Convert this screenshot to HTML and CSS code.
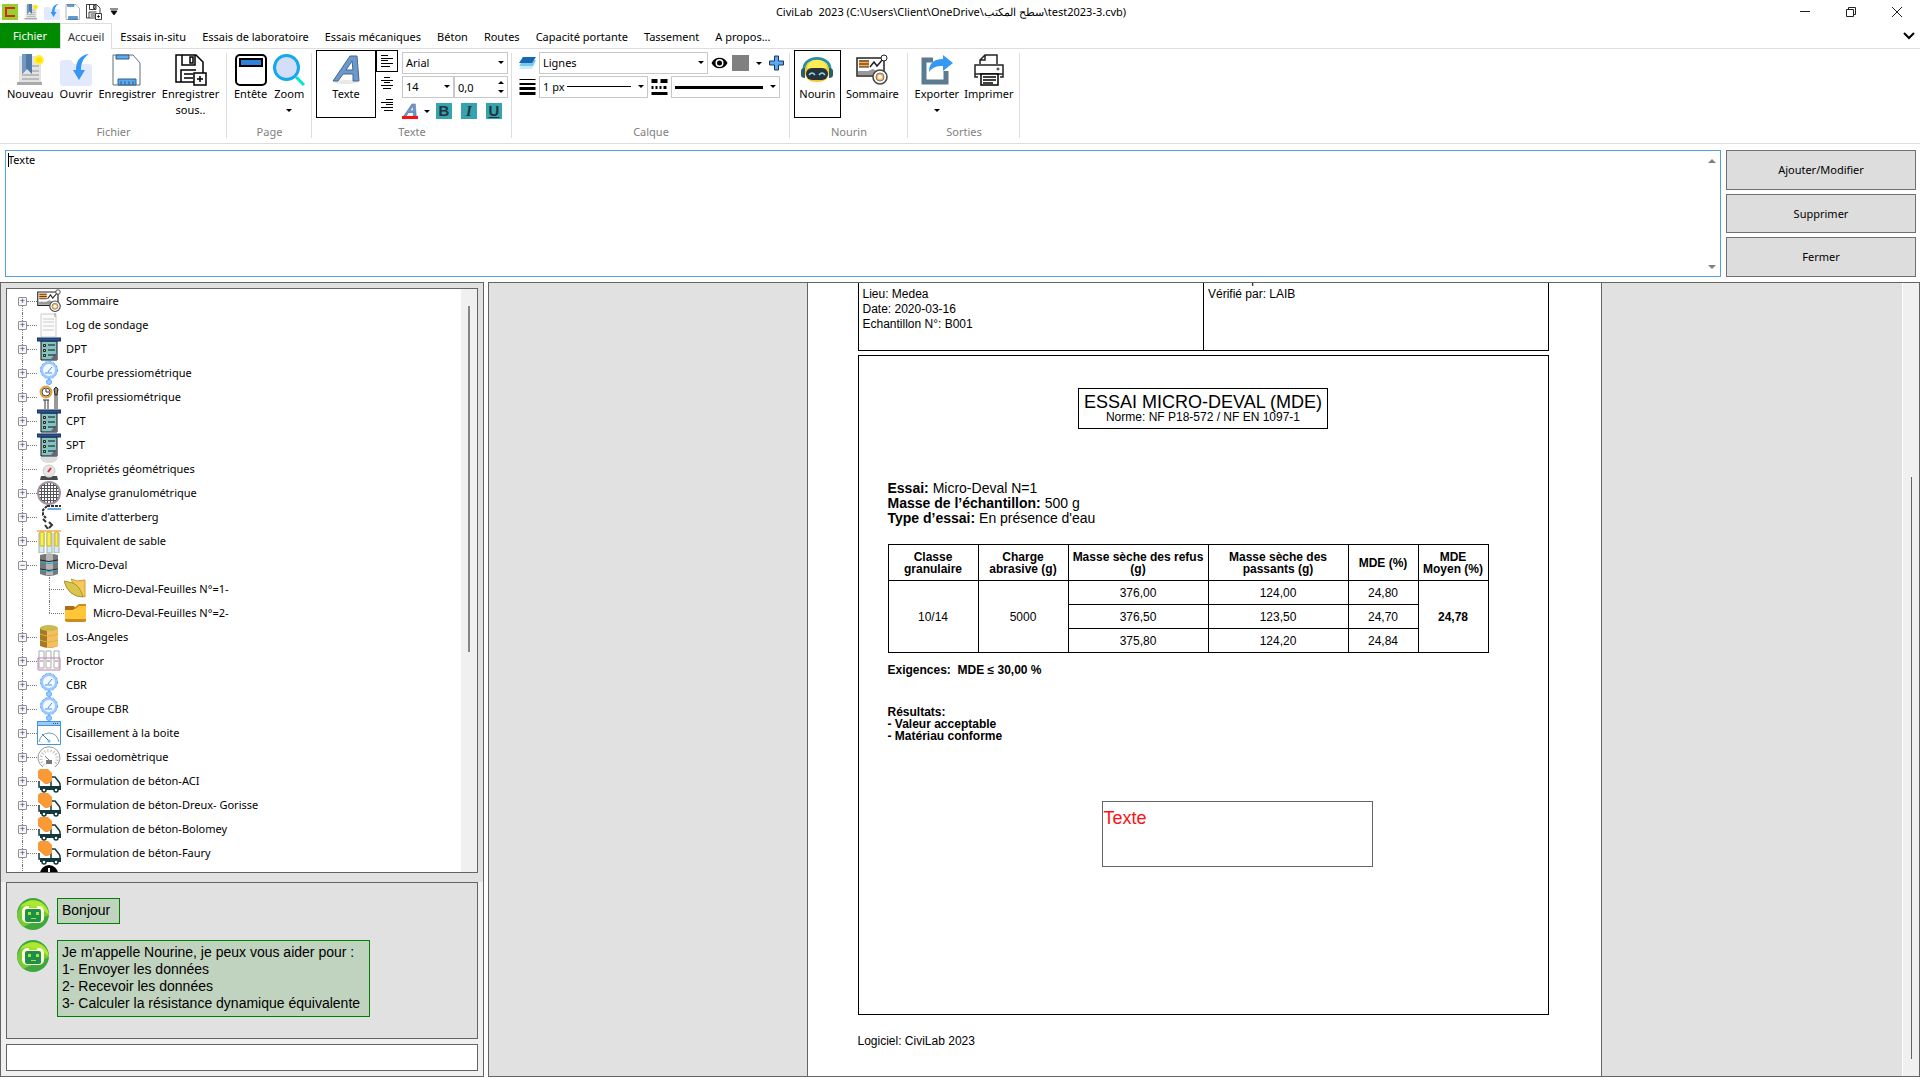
FILE: index.html
```html
<!DOCTYPE html>
<html lang="fr">
<head>
    <meta charset="UTF-8">
    <meta name="viewport" content="width=device-width, initial-scale=1.0">
    <title>CiviLab 2023</title>
    <link rel="stylesheet" href="styles.css">
</head>
<body>

    <!-- Icons -->
    <svg class="sprite" aria-hidden="true">
        <symbol id="logo" viewBox="0 0 16 16">
            <rect width="16" height="16" fill="#8fd42e"/>
            <path d="M13 4H4v8h9" fill="none" stroke="#e8201c" stroke-width="2"/>
        </symbol>
        <symbol id="new" viewBox="0 0 32 32">
            <path d="M5 2h22v27H5z" fill="#e3e3e3"/>
            <path d="M3 28h25v3H3z" fill="#aaa"/>
            <path d="M18 12h7M18 17h7M8 21h17M8 25h17" stroke="#bbb" stroke-width="2"/>
            <path d="M8 0h10v20l-5-5-5 5z" fill="#4f79a8"/>
            <path d="M8 0h4v16l-4 4z" fill="#7299c2"/>
            <circle cx="25" cy="6" r="5" fill="#fff04a"/>
            <circle cx="25" cy="6" r="3" fill="#ffe100"/>
        </symbol>
        <symbol id="open" viewBox="0 0 32 32">
            <path d="M0 9q0-3 3-3h8l3 4h15q3 0 3 3v16q0 3-3 3H3q-3 0-3-3z" fill="#e2e9fd"/>
            <path d="M29 0C20 1 16 7 16 16h-3l6 10 6-10h-4c0-7 2-12 8-16z" fill="#3596f5"/>
        </symbol>
        <symbol id="save" viewBox="0 0 32 32">
            <path d="M2 1h20l7 8v22H2z" fill="#fff" stroke="#5f7180"/>
            <path d="M5 1h13v4H5zM7 25h18v6H7z" fill="#5aa9f2" stroke="#345d80"/>
            <path d="M10 27v4M14 27v4M18 27v4M22 27v4" stroke="#26649c"/>
        </symbol>
        <symbol id="saveas" viewBox="0 0 32 32">
            <path d="M20 28H1V1h20l7 7v11M7 1v10h13V1M6 28V16h15M9 20h9M9 24h9M15 3h3v6h-3z" fill="none" stroke="#000" stroke-width="1.500"/>
            <path d="M19 19h12v12H19zM25 22v6M22 25h6" fill="#fff" stroke="#000" stroke-width="1.500"/>
        </symbol>
        <symbol id="header" viewBox="0 0 32 32">
            <rect x="1" y="1" width="30" height="30" rx="4" fill="#fff" stroke="#000" stroke-width="2"/>
            <rect x="5" y="5" width="22" height="7" fill="#2d83d8" stroke="#000" stroke-width="2"/>
        </symbol>
        <symbol id="zoom" viewBox="0 0 32 32">
            <path d="M23 23l8 8" stroke="#00e5cf" stroke-width="3"/>
            <circle cx="13.500" cy="13.500" r="12" fill="#d4def8" stroke="#16a8ec" stroke-width="3"/>
        </symbol>
        <symbol id="texta" viewBox="0 0 32 32">
            <ellipse cx="16" cy="28" rx="12" ry="2" fill="#e8e8e8"/>
            <path d="M3 27L20 2h7l2 25h-6v-7H13l-5 7zM16 16h7l-1-9z" fill="#6c99cc" stroke="#44658e" fill-rule="evenodd"/>
        </symbol>
        <symbol id="layers" viewBox="0 0 17 14">
            <path d="M4 7h12l-3 6H0z" fill="#c8ecfb"/>
            <path d="M4 4h13l-3 6H0z" fill="#79c8f0"/>
            <path d="M4 1h13l-4 6H0z" fill="#1566b4"/>
        </symbol>
        <symbol id="eye" viewBox="0 0 16 16">
            <path d="M0 8C3 1 13 1 16 8c-3 7-13 7-16 0z"/>
            <circle cx="8" cy="8" r="4" fill="#fff"/>
            <circle cx="8" cy="8" r="2.500"/>
        </symbol>
        <symbol id="plus" viewBox="0 0 16 16">
            <path d="M6 1h4v5h5v4h-5v5H6v-5H1V6h5z" fill="#5ba8f5" stroke="#16385a"/>
        </symbol>
        <symbol id="weights" viewBox="0 0 16 16">
            <path d="M0 0h16v1H0zM0 4h16v2H0zM0 8h16v3H0zM0 13h16v3H0z"/>
        </symbol>
        <symbol id="dashes" viewBox="0 0 16 16">
            <path d="M0 0h6v4H0zM9 0h7v4H9zM0 7h2v3H0zM4 7h2v3H4zM8 7h2v3H8zM12 7h3v3h-3zM0 13h16v3H0z"/>
        </symbol>
        <symbol id="bot" viewBox="0 0 32 32">
            <path d="M3 15C3 1 29 1 29 15" fill="none" stroke="#2a8f9e" stroke-width="3"/>
            <path d="M4 18C3 2 29 2 28 18q0 10-12 10T4 18z" fill="#f1c92f"/>
            <path d="M6 14C8 3 24 3 26 14z" fill="#fbee55"/>
            <rect x="5" y="14" width="22" height="12" rx="6" fill="#26333c"/>
            <path d="M8 21q3-4 6 0M18 21q3-4 6 0" fill="none" stroke="#8bd8ef" stroke-width="1.500"/>
            <path d="M0 17q0-3 4-3v10q-4 0-4-3zM32 17q0-3-4-3v10q4 0 4-3z" fill="#27606d"/>
        </symbol>
        <symbol id="report" viewBox="0 0 32 32">
            <path d="M1 4h27v18H1z" fill="#fff" stroke="#222" stroke-width="1.500"/>
            <path d="M3 6h10v7H3z" fill="#ffac4a"/>
            <path d="M3 7h10M3 10h10M3 13h10" stroke="#222"/>
            <path d="M2 17h10l5-2 5 3v3H2z" fill="#999"/>
            <path d="M14 13l4-5 3 4 7-8" fill="none" stroke="#222" stroke-width="1.500"/>
            <circle cx="28" cy="4" r="3" fill="#fff" stroke="#222"/>
            <circle cx="24" cy="23" r="7" fill="#fff" stroke="#444" stroke-width="1.500"/>
            <circle cx="24" cy="23" r="4" fill="#ffb45a" stroke="#777"/>
            <circle cx="24" cy="23" r="2" fill="#fff"/>
        </symbol>
        <symbol id="export" viewBox="0 0 32 32">
            <path d="M12 6H3v22h22V17" fill="none" stroke="#5b7b91" stroke-width="5"/>
            <path d="M8 18C8 9 13 5 22 5V1l10 8-10 8v-5c-7 0-10 1-14 6z" fill="#3598f5"/>
        </symbol>
        <symbol id="print" viewBox="0 0 32 32">
            <path d="M7 10V6l5-5h12v9M12 1v5H7M5 23H2V11h28v12h-3M2 20h28" fill="none" stroke="#222" stroke-width="1.500"/>
            <circle cx="25" cy="15" r="1" fill="none" stroke="#222"/>
            <path d="M8 20h17v11H8zM10 23h13M10 26h13M10 29h10" fill="#fff" stroke="#000" stroke-width="1.500"/>
        </symbol>
        <symbol id="sheet" viewBox="0 0 24 24">
            <path d="M4 1h15v23H4z" fill="#fbfbfb" stroke="#ccc"/>
            <path d="M6 6h11M6 9h11M6 13h11M6 17h11" stroke="#ccc"/>
            <path d="M18 0v4" stroke="#999"/>
        </symbol>
        <symbol id="rig" viewBox="0 0 24 24">
            <path d="M4 4h16v19H4z" fill="#84c3c3" stroke="#111"/>
            <path d="M13 23l7-8v8z" fill="#667"/>
            <path d="M0 1h24v3H0z" fill="#2c5597" stroke="#132a50"/>
            <path d="M11 8h7M11 13h7M11 18h7" stroke="#111"/>
            <path d="M6.500 7.500h2v2h-2zM6.500 12.500h2v2h-2zM6.500 17.500h2v2h-2z" fill="#ffb340" stroke="#222"/>
        </symbol>
        <symbol id="gauge" viewBox="0 0 24 24">
            <circle cx="12" cy="9" r="7.500" fill="#f3f9ff" stroke="#9ccaff" stroke-width="3"/>
            <circle cx="12" cy="9" r="8.500" fill="none" stroke="#6aaeff" stroke-dasharray="2 2"/>
            <path d="M11 11l4-5M8 12h7M12 18v2" stroke="#3e91f5"/>
            <circle cx="12" cy="21" r="2.500" fill="#9ccaff" stroke="#5da5fa"/>
        </symbol>
        <symbol id="profile" viewBox="0 0 24 24">
            <circle cx="9" cy="7" r="5.500" fill="#fff" stroke="#e4a237" stroke-width="2"/>
            <circle cx="9" cy="7" r="4" fill="none" stroke="#444"/>
            <path d="M9 4v3h3M6 15h6M8 15v9M11 15v9M18 9v15M20 9v15" fill="none" stroke="#333"/>
            <path d="M19 2l2 2-1 6h-2l-1-6z" fill="#888" stroke="#222"/>
        </symbol>
        <symbol id="scale" viewBox="0 0 24 24">
            <path d="M3 0h18q-1 6-9 6T3 0z" fill="#ddd"/>
            <circle cx="12" cy="14" r="6" fill="#e4e4e9" stroke="#ccc"/>
            <path d="M4 19h4q4 3 8 0h4l1 4H3z" fill="#494949"/>
            <path d="M11 15l3-4" stroke="#e33333" stroke-width="2"/>
        </symbol>
        <symbol id="sieve" viewBox="0 0 24 24">
            <circle cx="12" cy="12" r="11" fill="#fff" stroke="#a08f9e" stroke-width="2"/>
            <path d="M4.500 5v14M7.500 3v18M10.500 2v20M13.500 2v20M16.500 3v18M19.500 5v14M5 4.500h14M3 7.500h18M2 10.500h20M2 13.500h20M3 16.500h18M5 19.500h14" stroke="#555"/>
        </symbol>
        <symbol id="limit" viewBox="0 0 24 24">
            <path d="M10 1h14M10 1l-4 4v5l3 3" fill="none" stroke="#333" stroke-width="2" stroke-dasharray="3 1"/>
            <path d="M11 3h13v2H10z" fill="#67a8e6"/>
            <path d="M6 14l3 3M12 17l3 3-3 3M8 20l3 4" fill="none" stroke="#333" stroke-width="2"/>
        </symbol>
        <symbol id="tubes" viewBox="0 0 24 24">
            <path d="M0 2h24" stroke="#f6bd8b" stroke-width="2"/>
            <path d="M2 4h5v20H2zM10 4h5v20h-5zM17 4h5v20h-5z" fill="#cdeefb" stroke="#aaa"/>
            <path d="M3 3h4v14H3zM10 3h4v14h-4zM18 3h3v14h-3z" fill="#faef51" stroke="#c8b928"/>
        </symbol>
        <symbol id="drum" viewBox="0 0 24 24">
            <path d="M3 2v19q9 4 18 0V2q-9-3-18 0z" fill="#777"/>
            <path d="M9 1h7v21H9z" fill="#b4b4b4"/>
            <path d="M3 7q9 3 18 0M3 16q9 3 18 0" fill="none" stroke="#222"/>
            <path d="M3 9q9 3 18 0M3 17q9 3 18 0" fill="none" stroke="#2aa8d3"/>
        </symbol>
        <symbol id="folderopen" viewBox="0 0 24 24">
            <path d="M7 2l6 2 8-1v17l-7-3z" fill="#f7c85e" stroke="#d29b32"/>
            <path d="M0 4l9 2q7 3 10 14-7 0-12-4T0 4z" fill="#d9c54d" stroke="#a99629"/>
        </symbol>
        <symbol id="folder" viewBox="0 0 24 24">
            <path d="M1 6h10l4-3h7v17q0 1-2 1H3q-2 0-2-2z" fill="#cc8b1d"/>
            <path d="M1 8h10l4-3h7v13H1z" fill="#ffc637"/>
            <path d="M1 5h9l1 2-2 2H1z" fill="#b06c1b"/>
        </symbol>
        <symbol id="barrel" viewBox="0 0 24 24">
            <path d="M3 3v18q9 4 18 0V3z" fill="#a87828"/>
            <path d="M10 3h11v18q-5 2-11 2z" fill="#f7bd60"/>
            <ellipse cx="12" cy="3" rx="9" ry="3" fill="#c8bc50"/>
            <path d="M3 9q9 4 18 0M3 15q9 4 18 0" fill="none" stroke="#c9bc35"/>
        </symbol>
        <symbol id="rack" viewBox="0 0 24 24">
            <path d="M2 2h5v17H2zM9 2h5v17H9zM17 2h5v17h-5z" fill="#fff" stroke="#aaa"/>
            <path d="M3 12h3M10 12h3M18 12h3" stroke="#888"/>
            <path d="M1 9h22v12H1z" fill="none" stroke="#c081b0"/>
        </symbol>
        <symbol id="shear" viewBox="0 0 24 24">
            <path d="M.5 .5h23v23H.5z" fill="#fff" stroke="#4294df"/>
            <path d="M.5 .5h23v4H.5z" fill="#9acbf5" stroke="#4294df"/>
            <path d="M16 2.500h5" stroke="#256" stroke-dasharray="1 1"/>
            <path d="M2 21q2-9 10-9t10 9" fill="none" stroke="#7a98b5"/>
            <path d="M5 13l7 7" stroke="#2c78bd"/>
            <circle cx="12" cy="20" r="1.500" fill="#6cb3ef"/>
        </symbol>
        <symbol id="dial" viewBox="0 0 24 24">
            <path d="M6 22a11 11 0 1 1 12 0" fill="none" stroke="#999"/>
            <path d="M7 20a8 8 0 1 1 10 0" fill="none" stroke="#bbb" stroke-width="3" stroke-dasharray="1 2"/>
            <path d="M8 11l5 5" stroke="#777"/>
            <path d="M9 15h6v4H9z" fill="#777"/>
        </symbol>
        <symbol id="truck" viewBox="0 0 24 24">
            <path d="M2 12v6h12V8h4l4 5 1 2v4" fill="#fff" stroke="#12383c" stroke-width="1.500"/>
            <path d="M3 17h21v4H3z" fill="#12383c"/>
            <path d="M3 0h8l4 4v8l-4 3H8L1 9V2z" fill="#fb9937"/>
            <circle cx="7" cy="21" r="2" fill="#fff" stroke="#12383c" stroke-width="1.500"/>
            <circle cx="19" cy="21" r="2" fill="#fff" stroke="#12383c" stroke-width="1.500"/>
        </symbol>
        <symbol id="disc" viewBox="0 0 24 24">
            <circle cx="12" cy="9" r="9"/>
            <path d="M12 3v5" stroke="#fff" stroke-width="2"/>
        </symbol>
        <symbol id="avatar" viewBox="0 0 32 32">
            <circle cx="16" cy="16" r="16" fill="#3da83b"/>
            <path d="M3 9A16 16 0 0 1 32 17L6 29Q0 22 0 16z" fill="#77c936"/>
            <path d="M3 9A16 16 0 0 1 32 17Q18 4 3 9z" fill="#aee832"/>
            <rect x="5" y="8" width="22" height="17" rx="5" fill="#fdfdd8"/>
            <rect x="8" y="11" width="16" height="13" rx="2" fill="#1c8f4c"/>
            <path d="M12 9h8" stroke="#a5df30" stroke-width="2"/>
            <path d="M11 14h3v3h-3zM19 14h3v3h-3zM14 20h5v1h-5z" fill="#a6e530"/>
        </symbol>
    </svg>

    <!-- Title bar -->
    <header class="titlebar">
        <div class="quick">
            <svg><use href="#logo"/></svg>
            <button aria-label="Nouveau"><svg><use href="#new"/></svg></button>
            <button aria-label="Ouvrir"><svg><use href="#open"/></svg></button>
            <button aria-label="Enregistrer"><svg><use href="#save"/></svg></button>
            <button aria-label="Enregistrer sous"><svg><use href="#saveas"/></svg></button>
            <button class="quick-more" aria-label="Personnaliser"><svg viewBox="0 0 8 8"><path d="M0 1h8M1 3h6L4 7z" stroke="#222"/></svg></button>
        </div>
        <h1>CiviLab&nbsp; 2023 (C:\Users\Client\OneDrive\سطح المكتب\test2023-3.cvb)</h1>
        <div class="window-buttons">
            <button aria-label="Réduire"><svg viewBox="0 0 10 10"><path d="M0 4.500h10"/></svg></button>
            <button aria-label="Restaurer"><svg viewBox="0 0 10 10"><path d="M.5 2.500h7v7h-7zM2.500 2.500v-2h7v7h-2"/></svg></button>
            <button aria-label="Fermer la fenêtre"><svg viewBox="0 0 10 10"><path d="M0 0l10 10M10 0L0 10"/></svg></button>
        </div>
    </header>

    <nav class="tabs">
        <a href="#" class="tab-file">Fichier</a>
        <a href="#" class="active">Accueil</a>
        <a href="#">Essais in-situ</a>
        <a href="#">Essais de laboratoire</a>
        <a href="#">Essais mécaniques</a>
        <a href="#">Béton</a>
        <a href="#">Routes</a>
        <a href="#">Capacité portante</a>
        <a href="#">Tassement</a>
        <a href="#">A propos...</a>
        <button class="collapse" aria-label="Réduire le ruban"><svg viewBox="0 0 12 8"><path d="M1 1l5 5 5-5"/></svg></button>
    </nav>

    <!-- Ribbon -->
    <div class="ribbon">
        <section class="group group-file">
            <div class="tools">
                <button class="tool"><svg><use href="#new"/></svg>Nouveau</button>
                <button class="tool"><svg><use href="#open"/></svg>Ouvrir</button>
                <button class="tool"><svg><use href="#save"/></svg>Enregistrer</button>
                <button class="tool"><svg><use href="#saveas"/></svg>Enregistrer<br>sous..</button>
            </div>
            <h2>Fichier</h2>
        </section>
        <section class="group group-page">
            <div class="tools">
                <button class="tool"><svg><use href="#header"/></svg>Entête</button>
                <button class="tool"><svg><use href="#zoom"/></svg>Zoom<i class="arrow"></i></button>
            </div>
            <h2>Page</h2>
        </section>
        <section class="group group-text">
            <div class="tools">
                <button class="tool selected tool-text"><svg><use href="#texta"/></svg>Texte</button>
                <div class="aligns">
                    <button class="selected" aria-label="Aligner à gauche"><svg viewBox="0 0 12 12"><path d="M0 .5h7M0 3.500h12M0 5.500h7M0 8.500h12M0 11.500h9"/></svg></button>
                    <button aria-label="Centrer"><svg viewBox="0 0 12 12"><path d="M3 .5h6M0 3.500h12M3 5.500h6M0 8.500h12M2 11.500h8"/></svg></button>
                    <button aria-label="Aligner à droite"><svg viewBox="0 0 12 12"><path d="M5 .5h7M0 3.500h12M5 5.500h7M0 8.500h12M3 11.500h9"/></svg></button>
                </div>
                <div class="fields">
                    <div class="row">
                        <label class="drop drop-font"><select aria-label="Police"><option>Arial</option></select></label>
                    </div>
                    <div class="row">
                        <label class="drop drop-size"><select aria-label="Taille"><option>14</option></select></label>
                        <label class="spin"><input type="text" value="0,0" aria-label="Rotation"></label>
                    </div>
                    <div class="row row-format">
                        <button class="font-color" aria-label="Couleur du texte"><svg viewBox="0 0 32 27"><use href="#texta" width="32" height="32"/></svg></button>
                        <i class="arrow"></i>
                        <button class="format"><b>B</b></button>
                        <button class="format"><em>I</em></button>
                        <button class="format"><u>U</u></button>
                    </div>
                </div>
            </div>
            <h2>Texte</h2>
        </section>
        <section class="group group-layer">
            <div class="tools">
                <div class="fields">
                    <div class="row">
                        <svg class="small"><use href="#layers"/></svg>
                        <label class="drop drop-layer"><select aria-label="Calque"><option>Lignes</option></select></label>
                        <button class="mini" aria-label="Afficher"><svg class="small"><use href="#eye"/></svg></button>
                        <button class="mini swatch" aria-label="Couleur du calque"></button>
                        <i class="arrow"></i>
                        <button class="mini" aria-label="Ajouter un calque"><svg class="small"><use href="#plus"/></svg></button>
                    </div>
                    <div class="row">
                        <svg class="small"><use href="#weights"/></svg>
                        <label class="drop drop-line"><select aria-label="Epaisseur"><option>1 px</option></select><span class="line thin"></span></label>
                        <svg class="small"><use href="#dashes"/></svg>
                        <label class="drop drop-line"><select aria-label="Style de ligne"><option></option></select><span class="line thick"></span></label>
                    </div>
                </div>
            </div>
            <h2>Calque</h2>
        </section>
        <section class="group group-nourin">
            <div class="tools">
                <button class="tool selected"><svg><use href="#bot"/></svg>Nourin</button>
                <button class="tool"><svg><use href="#report"/></svg>Sommaire</button>
            </div>
            <h2>Nourin</h2>
        </section>
        <section class="group group-out">
            <div class="tools">
                <button class="tool"><svg><use href="#export"/></svg>Exporter<i class="arrow"></i></button>
                <button class="tool"><svg><use href="#print"/></svg>Imprimer</button>
            </div>
            <h2>Sorties</h2>
        </section>
    </div>

    <!-- Text editor -->
    <div class="editor">
        <div class="editor-box">
            <textarea aria-label="Texte">Texte</textarea>
            <span class="caret"></span>
            <i class="scroll-up"></i>
            <i class="scroll-down"></i>
        </div>
        <div class="editor-buttons">
            <button>Ajouter/Modifier</button>
            <button>Supprimer</button>
            <button>Fermer</button>
        </div>
    </div>

    <main class="workspace">
        <aside class="sidebar">
            <div class="tree-panel">
                <ul class="tree">
                    <li><button class="expander">+</button><svg><use href="#report"/></svg><a href="#">Sommaire</a></li>
                    <li><button class="expander">+</button><svg><use href="#sheet"/></svg><a href="#">Log de sondage</a></li>
                    <li><button class="expander">+</button><svg><use href="#rig"/></svg><a href="#">DPT</a></li>
                    <li><button class="expander">+</button><svg><use href="#gauge"/></svg><a href="#">Courbe pressiométrique</a></li>
                    <li><button class="expander">+</button><svg><use href="#profile"/></svg><a href="#">Profil pressiométrique</a></li>
                    <li><button class="expander">+</button><svg><use href="#rig"/></svg><a href="#">CPT</a></li>
                    <li><button class="expander">+</button><svg><use href="#rig"/></svg><a href="#">SPT</a></li>
                    <li class="leaf"><svg><use href="#scale"/></svg><a href="#">Propriétés géométriques</a></li>
                    <li><button class="expander">+</button><svg><use href="#sieve"/></svg><a href="#">Analyse granulométrique</a></li>
                    <li><button class="expander">+</button><svg><use href="#limit"/></svg><a href="#">Limite d'atterberg</a></li>
                    <li><button class="expander">+</button><svg><use href="#tubes"/></svg><a href="#">Equivalent de sable</a></li>
                    <li><button class="expander">−</button><svg><use href="#drum"/></svg><a href="#">Micro-Deval</a>
                        <ul>
                            <li><svg><use href="#folderopen"/></svg><a href="#">Micro-Deval-Feuilles N°=1-</a></li>
                            <li><svg><use href="#folder"/></svg><a href="#">Micro-Deval-Feuilles N°=2-</a></li>
                        </ul>
                    </li>
                    <li><button class="expander">+</button><svg><use href="#barrel"/></svg><a href="#">Los-Angeles</a></li>
                    <li><button class="expander">+</button><svg><use href="#rack"/></svg><a href="#">Proctor</a></li>
                    <li><button class="expander">+</button><svg><use href="#gauge"/></svg><a href="#">CBR</a></li>
                    <li><button class="expander">+</button><svg><use href="#gauge"/></svg><a href="#">Groupe CBR</a></li>
                    <li><button class="expander">+</button><svg><use href="#shear"/></svg><a href="#">Cisaillement à la boite</a></li>
                    <li><button class="expander">+</button><svg><use href="#dial"/></svg><a href="#">Essai oedomètrique</a></li>
                    <li><button class="expander">+</button><svg><use href="#truck"/></svg><a href="#">Formulation de béton-ACI</a></li>
                    <li><button class="expander">+</button><svg><use href="#truck"/></svg><a href="#">Formulation de béton-Dreux- Gorisse</a></li>
                    <li><button class="expander">+</button><svg><use href="#truck"/></svg><a href="#">Formulation de béton-Bolomey</a></li>
                    <li><button class="expander">+</button><svg><use href="#truck"/></svg><a href="#">Formulation de béton-Faury</a></li>
                    <li class="last"><svg><use href="#disc"/></svg></li>
                </ul>
                <div class="tree-scroll"><span></span></div>
            </div>
            <div class="chat-area">
                <div class="chat">
                    <div class="message">
                        <svg><use href="#avatar"/></svg>
                        <p>Bonjour</p>
                    </div>
                    <div class="message">
                        <svg><use href="#avatar"/></svg>
                        <p>Je m'appelle Nourine, je peux vous aider pour :<br>1- Envoyer les données<br>2- Recevoir les données<br>3- Calculer la résistance dynamique équivalente</p>
                    </div>
                </div>
                <input type="text" class="chat-input" aria-label="Message">
            </div>
        </aside>

        <div class="viewer">
            <article class="page">
                <div class="doc-head">
                    <p>Lieu: Medea<br>Date: 2020-03-16<br>Echantillon N°: B001</p>
                    <p>Calculé par:<br>Vérifié par: LAIB<br><br>&nbsp;</p>
                </div>
                <div class="doc-body">
                    <div class="doc-title">
                        <h3>ESSAI MICRO-DEVAL (MDE)</h3>
                        <p>Norme: NF P18-572 / NF EN 1097-1</p>
                    </div>
                    <div class="doc-info">
                        <p><b>Essai:</b> Micro-Deval N=1</p>
                        <p><b>Masse de l’échantillon:</b> 500 g</p>
                        <p><b>Type d’essai:</b> En présence d'eau</p>
                    </div>
                    <table>
                        <thead>
                            <tr>
                                <th class="c90">Classe granulaire</th>
                                <th class="c90">Charge abrasive (g)</th>
                                <th class="c140">Masse sèche des refus (g)</th>
                                <th class="c140">Masse sèche des passants (g)</th>
                                <th class="c70">MDE (%)</th>
                                <th class="c70">MDE Moyen (%)</th>
                            </tr>
                        </thead>
                        <tbody>
                            <tr>
                                <td rowspan="3">10/14</td>
                                <td rowspan="3">5000</td>
                                <td>376,00</td>
                                <td>124,00</td>
                                <td>24,80</td>
                                <td rowspan="3"><b>24,78</b></td>
                            </tr>
                            <tr>
                                <td>376,50</td>
                                <td>123,50</td>
                                <td>24,70</td>
                            </tr>
                            <tr>
                                <td>375,80</td>
                                <td>124,20</td>
                                <td>24,84</td>
                            </tr>
                        </tbody>
                    </table>
                    <p class="limits">Exigences:&nbsp; MDE ≤ 30,00 %</p>
                    <p class="results">Résultats:<br>- Valeur acceptable<br>- Matériau conforme</p>
                    <div class="text-frame">Texte</div>
                </div>
                <footer>Logiciel: CiviLab 2023</footer>
            </article>
            <div class="viewer-scroll"><span></span></div>
        </div>
    </main>

</body>
</html>
```
FILE: styles.css
```css
* {
    box-sizing: border-box;
}
body {
    margin: 0;
    height: 100vh;
    padding-bottom: 3px;
    display: flex;
    flex-direction: column;
    overflow: hidden;
    background-color: #fff;
    color: #000;
    font-family: "Noto Sans", "Open Sans", sans-serif;
    font-size: 11px;
    line-height: 16px;
}
button {
    font: inherit;
    color: inherit;
    background: none;
    border: 0;
    padding: 0;
}
a {
    color: inherit;
    text-decoration: none;
}
h1, h2, h3, p, ul {
    margin: 0;
    padding: 0;
    font-size: inherit;
    font-weight: normal;
}
svg {
    display: block;
    flex: none;
}
.sprite {
    position: absolute;
    width: 0;
    height: 0;
}

/* Title bar */
.titlebar {
    display: grid;
    grid-template-columns: 1fr auto 1fr;
    flex: none;
    height: 23px;
    align-items: center;
}
.titlebar h1 {
    font-size: 11px;
    margin-right: 18px;
}
.quick {
    display: flex;
    align-items: center;
    gap: 5px;
    padding-left: 2px;
}
.quick svg {
    width: 16px;
    height: 16px;
}
.quick .quick-more svg {
    width: 8px;
    height: 8px;
    margin-left: 3px;
}
.window-buttons {
    display: flex;
    justify-content: flex-end;
}
.window-buttons button {
    width: 46px;
    height: 23px;
    display: flex;
    align-items: center;
    justify-content: center;
}
.window-buttons svg {
    width: 10px;
    height: 10px;
    fill: none;
    stroke: #222;
}

/* Tabs */
.tabs {
    display: flex;
    flex: none;
    height: 26px;
    border-bottom: 1px solid #ddd;
}
.tabs a {
    height: 26px;
    padding: 6px 8px 0;
    white-space: nowrap;
}
.tabs .tab-file {
    width: 60px;
    height: 25px;
    padding-top: 5px;
    text-align: center;
    background-color: #008a00;
    color: #fff;
}
.tabs .active {
    background-color: #fff;
    border: 1px solid #ddd;
    border-bottom: 0;
    padding: 5px 7px 0;
    color: #333;
}
.collapse {
    margin-left: auto;
    padding-right: 5px;
}
.collapse svg {
    width: 12px;
    height: 8px;
    fill: none;
    stroke: #000;
    stroke-width: 2;
}

/* Ribbon */
.ribbon {
    display: flex;
    flex: none;
    height: 95px;
    border-bottom: 1px solid #ddd;
}
.group {
    display: flex;
    flex-direction: column;
    position: relative;
}
.group::after {
    content: "";
    position: absolute;
    right: 0;
    top: 4px;
    bottom: 5px;
    border-right: 1px solid #ddd;
}
.group h2 {
    color: #808080;
    text-align: center;
    margin-top: 6px;
}
.group-file {
    width: 227px;
}
.group-page {
    width: 85px;
}
.group-text {
    width: 200px;
}
.group-layer {
    width: 278px;
}
.group-nourin {
    width: 118px;
}
.group-out {
    width: 112px;
}
.tools {
    display: flex;
    height: 69px;
    padding: 1px 4px;
}
.tool {
    display: flex;
    flex-direction: column;
    align-items: center;
    padding: 3px 3px 0;
    height: 68px;
    border: 1px solid transparent;
    text-align: center;
    white-space: nowrap;
}
.group-file .tool, .group-page .tool {
    padding: 3px 2px 0;
}
.group-nourin .tool, .group-out .tool {
    flex: 1 1 auto;
    padding: 3px 1px 0;
}
.tool svg {
    width: 32px;
    height: 32px;
}
.selected {
    border: 1px solid #000;
}
.tool-text {
    width: 60px;
}
.arrow {
    display: block;
    width: 5px;
    border: solid transparent;
    border-width: 3px 3px 0;
    border-top-color: #000;
}
.tool .arrow {
    margin-top: 7px;
}
.aligns {
    display: flex;
    flex-direction: column;
    width: 22px;
}
.aligns button {
    display: flex;
    align-items: center;
    justify-content: center;
    flex: none;
    height: 22px;
}
.aligns svg {
    width: 12px;
    height: 12px;
    stroke: #000;
}
.fields {
    display: flex;
    flex-direction: column;
    gap: 2px;
    padding: 2px 0 0 4px;
}
.row {
    display: flex;
    align-items: center;
    flex: none;
    height: 22px;
}
.drop, .spin {
    position: relative;
    display: block;
    height: 22px;
}
.drop select, .spin input {
    appearance: none;
    display: block;
    width: 100%;
    height: 22px;
    padding: 0 3px;
    border: 1px solid #c8c8c8;
    border-radius: 0;
    background-color: #fff;
    font: inherit;
    color: #000;
}
.drop::after, .spin::before, .spin::after {
    content: "";
    position: absolute;
    top: 9px;
    right: 4px;
    border: solid transparent;
    border-width: 3px 3px 0;
    border-top-color: #000;
}
.spin::before {
    top: 5px;
    border-width: 0 3px 3px;
    border-bottom-color: #000;
}
.spin::after {
    top: 14px;
}
.drop-font {
    width: 106px;
}
.drop-size {
    width: 52px;
}
.spin {
    width: 54px;
}
.row-format {
    gap: 9px;
}
.font-color {
    border-bottom: 3px solid #f11;
}
.font-color svg {
    width: 16px;
    height: 13px;
}
.row-format .arrow {
    margin: 0 -3px;
}
.format {
    width: 16px;
    height: 16px;
    background-color: #34a5ae;
    color: #26333c;
    font: bold 15px/16px "Liberation Sans", Arial, sans-serif;
}
.format em {
    font-family: "Liberation Serif", serif;
}
.group-layer .row {
    gap: 3px;
}
.group-layer .fields {
    padding-left: 3px;
}
.small {
    width: 17px;
    height: 16px;
}
.drop-layer {
    width: 169px;
}
.drop-line {
    width: 109px;
}
.mini {
    width: 17px;
    height: 16px;
}
.swatch {
    background-color: #808080;
    margin: 0 4px 0 1px;
}
.group-layer .row > .arrow {
    margin-right: 3px;
}
.line {
    position: absolute;
    top: 10px;
    right: 17px;
    border-top: 1px solid #000;
}
.thin {
    left: 28px;
}
.thick {
    left: 4px;
    border-top-width: 3px;
}

/* Text editor */
.editor {
    display: flex;
    flex: none;
    gap: 5px;
    padding: 6px 4px 5px 5px;
}
.editor-box {
    position: relative;
    flex: 1;
}
.editor textarea {
    display: block;
    width: 100%;
    height: 127px;
    padding: 1px 2px;
    border: 1px solid #569de5;
    outline: 0;
    resize: none;
    font: inherit;
}
.caret {
    position: absolute;
    left: 3px;
    top: 3px;
    height: 14px;
    border-left: 1px solid #000;
}
.scroll-up, .scroll-down {
    position: absolute;
    right: 5px;
    top: 9px;
    border: solid transparent;
    border-width: 0 4px 4px;
    border-bottom-color: #808080;
}
.scroll-down {
    top: auto;
    bottom: 8px;
    border-width: 4px 4px 0;
    border-top-color: #808080;
}
.editor-buttons {
    display: flex;
    flex-direction: column;
    gap: 4px;
    width: 190px;
}
.editor-buttons button {
    flex: 1;
    background-color: #ddd;
    border: 1px solid #707070;
}

/* Workspace */
.workspace {
    display: flex;
    flex: 1;
    gap: 4px;
    min-height: 0;
}
.sidebar {
    display: flex;
    flex-direction: column;
    width: 484px;
    border: 1px solid #646464;
    background-color: #e1e1e1;
    padding-top: 5px;
}
.tree-panel {
    display: flex;
    flex: 1;
    min-height: 0;
    margin: 0 5px 9px;
    border: 1px solid #646464;
    background-color: #fff;
    overflow: hidden;
}
.tree {
    flex: 1;
    list-style: none;
}
.tree ul {
    list-style: none;
    flex-basis: 100%;
}
.tree li {
    position: relative;
    display: flex;
    flex-wrap: wrap;
    align-items: center;
    padding-left: 11px;
}
.tree li::before {
    content: "";
    position: absolute;
    left: 15px;
    top: 0;
    bottom: 0;
    border-left: 1px dotted #777;
}
.tree > li:first-child::before {
    top: 12px;
}
.tree li::after {
    content: "";
    position: absolute;
    left: 20px;
    top: 12px;
    width: 10px;
    border-top: 1px dotted #777;
}
.tree li.leaf, .tree li.last {
    padding-left: 20px;
}
.tree li.leaf::after {
    left: 15px;
    width: 15px;
}
.tree li.last::after {
    display: none;
}
.tree li li {
    padding-left: 36px;
}
.tree li li::before {
    left: 31px;
}
.tree li li:last-child::before {
    bottom: 12px;
}
.tree li li::after {
    left: 31px;
    width: 15px;
}
.tree svg {
    width: 24px;
    height: 24px;
    margin: 0 5px 0 10px;
}
.expander {
    position: relative;
    z-index: 1;
    width: 9px;
    height: 9px;
    border: 1px solid #919191;
    border-radius: 1px;
    background-color: #f6f6f6;
    color: #1c3c91;
    font: 9px/7px "Liberation Sans", Arial, sans-serif;
}
.tree-scroll {
    width: 16px;
    padding: 17px 7px;
    background-color: #f0f0f0;
}
.tree-scroll span {
    display: block;
    width: 2px;
    height: 63%;
    background-color: #858585;
}
.chat-area {
    flex: none;
    padding: 0 5px 5px;
    background-color: #f0f0f0;
    font-family: "Liberation Sans", Arial, sans-serif;
}
.chat {
    display: flex;
    flex-direction: column;
    gap: 10px;
    padding: 15px 10px 21px;
    border: 1px solid #646464;
    background-color: #e1e1e1;
    font-size: 14px;
}
.message {
    display: flex;
    gap: 8px;
    align-items: flex-start;
}
.message svg {
    width: 32px;
    height: 32px;
}
.message p {
    padding: 3px 9px 4px 4px;
    border: 1px solid #008000;
    background-color: #c0d3be;
    line-height: 17px;
}
.chat-input {
    display: block;
    width: 100%;
    height: 27px;
    margin-top: 5px;
    padding: 0 4px;
    border: 1px solid #646464;
    background-color: #fff;
    font: inherit;
}

/* Document viewer */
.viewer {
    display: grid;
    grid-template-columns: 17px 1fr 17px;
    flex: 1;
    min-height: 0;
    border: 1px solid #646464;
    background-color: #e1e1e1;
    font-family: "Liberation Sans", Arial, sans-serif;
    font-size: 12px;
    line-height: 14px;
    overflow: hidden;
}
.page {
    grid-column: 2;
    justify-self: center;
    display: flex;
    flex-direction: column;
    width: 795px;
    padding: 0 52px 0 50px;
    border: solid #646464;
    border-width: 0 1px;
    background-color: #fff;
}
.doc-head {
    display: grid;
    grid-template-columns: 1fr 1fr;
    grid-template-rows: 100%;
    align-items: end;
    height: 68px;
    flex: none;
    overflow: hidden;
    border: 1px solid #000;
    border-top: 0;
}
.doc-head p {
    padding: 0 4px 18px;
    line-height: 15px;
}
.doc-head p + p {
    border-left: 1px solid #000;
}
.doc-body {
    flex: 1;
    margin-top: 4px;
    padding: 32px 29px 0;
    border: 1px solid #000;
}
.doc-title {
    width: max-content;
    margin: 0 auto;
    padding: 5px 5px 4px;
    border: 1px solid #000;
    text-align: center;
}
.doc-title h3 {
    font-size: 18px;
    line-height: 16px;
}
.doc-info {
    margin: 52px 0 18px;
    font-size: 14px;
    line-height: 15px;
}
.page table {
    width: 601px;
    table-layout: fixed;
    border-collapse: collapse;
    line-height: 12px;
    text-align: center;
}
.page th, .page td {
    height: 24px;
    padding: 0;
    border: 1px solid #000;
}
.page th {
    height: 36px;
    padding: 0 3px;
}
.c90 {
    width: 90px;
}
.c140 {
    width: 140px;
}
.c70 {
    width: 70px;
}
.limits {
    margin: 10px 0 29px;
    font-weight: bold;
}
.results {
    font-weight: bold;
    line-height: 12px;
}
.text-frame {
    width: 271px;
    height: 66px;
    margin: 59px auto 0 214px;
    padding: 6px 1px;
    border: 1px solid #646464;
    color: #f11;
    font-size: 18px;
    line-height: 20px;
}
.page footer {
    padding: 19px 0 28px;
}
.viewer-scroll {
    display: flex;
    flex-direction: column;
    justify-content: flex-end;
    padding: 0 7px 17px 8px;
    border-left: 1px solid #fff;
    background-color: #f0f0f0;
}
.viewer-scroll span {
    display: block;
    height: 75%;
    background-color: #646464;
}
```
